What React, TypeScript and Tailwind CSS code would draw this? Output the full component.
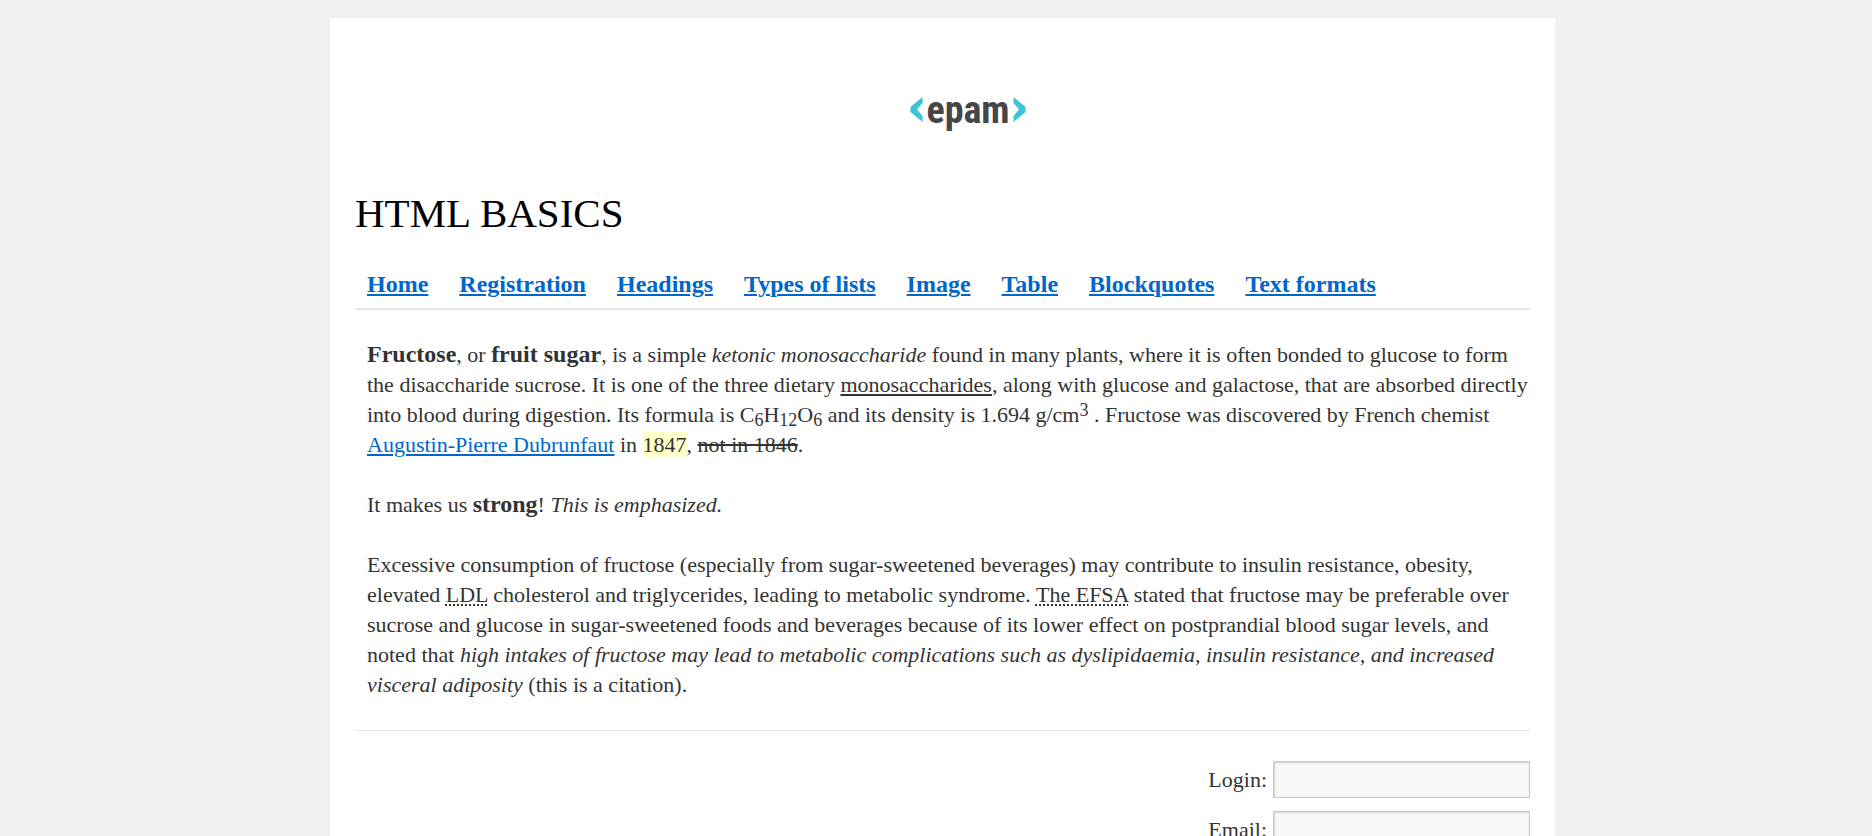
const navItems = [
  "Home",
  "Registration",
  "Headings",
  "Types of lists",
  "Image",
  "Table",
  "Blockquotes",
  "Text formats",
];

const fields = [
  { id: "login", label: "Login:", type: "text" },
  { id: "email", label: "Email:", type: "email" },
];

function Logo() {
  return (
    <svg width="116" height="50" viewBox="0 0 116 50" role="img" aria-label="epam">
      <path d="M12.500 9v6L7 21.500l5.500 6.500v6L.500 24v-5z" fill="#3bc3d9" />
      <text
        x="58"
        y="35"
        textAnchor="middle"
        fill="#464547"
        className="font-['Roboto_Condensed','Liberation_Sans_Narrow','Liberation_Sans',sans-serif] text-[38px] font-bold"
      >
        epam
      </text>
      <path d="M103.500 9v6l5.500 6.500-5.500 6.500v6l12-10v-5z" fill="#3bc3d9" />
    </svg>
  );
}

export default function App() {
  return (
    <div className="min-h-screen bg-[#f0f0f0] pt-[18px] pl-[13px] font-['Liberation_Serif',serif] text-[22px] leading-[30px] text-[#333]">
      <div className="mx-auto max-w-[1225px] bg-white px-[25px] pt-[70px] pb-[25px]">
        <header>
          <div className="flex justify-center pl-[50px]">
            <Logo />
          </div>
          <h1 className="mt-[49px] text-[41px] leading-[52px] text-black">HTML BASICS</h1>
          <nav className="mt-[30px] border-b-2 border-[#e6e6e6] pb-[9px] pl-3">
            <ul className="flex flex-wrap gap-x-[31px] text-[24px]">
              {navItems.map((item) => (
                <li key={item}>
                  <a href="#" className="font-bold text-[#0066cc] underline decoration-2 underline-offset-2">
                    {item}
                  </a>
                </li>
              ))}
            </ul>
          </nav>
        </header>

        <main className="mt-[30px]">
          <div className="flex flex-col gap-[30px] pl-3 [&_b]:text-[24px] [&_b]:leading-none [&_strong]:text-[24px] [&_strong]:leading-none [&_sub]:-bottom-1 [&_sub]:text-[18px] [&_sup]:-top-1.5 [&_sup]:text-[18px]">
            <p>
              <b>Fructose</b>, or <b>fruit sugar</b>, is a simple <i>ketonic monosaccharide</i> found in many
              plants, where it is often bonded to glucose to form the disaccharide sucrose. It is one of the three
              dietary <u className="decoration-2 underline-offset-2">monosaccharides</u>, along with glucose and
              galactose, that are absorbed directly into blood during digestion. Its formula is C<sub>6</sub>H
              <sub>12</sub>O<sub>6</sub> and its density is 1.694 g/cm<sup>3</sup> . Fructose was discovered by
              French chemist{" "}
              <a href="#" className="text-[#0066cc] underline decoration-2 underline-offset-2">
                Augustin-Pierre Dubrunfaut
              </a>{" "}
              in <mark className="bg-[#ffffcc] text-[#333]">1847</mark>, <del className="decoration-2">not in 1846</del>.
            </p>
            <p>
              It makes us <strong>strong</strong>! <em>This is emphasized.</em>
            </p>
            <p>
              Excessive consumption of fructose (especially from sugar-sweetened beverages) may contribute to insulin
              resistance, obesity, elevated{" "}
              <abbr className="underline decoration-dotted decoration-2 underline-offset-2">LDL</abbr> cholesterol and
              triglycerides, leading to metabolic syndrome.{" "}
              <abbr className="underline decoration-dotted decoration-2 underline-offset-2">The EFSA</abbr> stated that
              fructose may be preferable over sucrose and glucose in sugar-sweetened foods and beverages because of its
              lower effect on postprandial blood sugar levels, and noted that{" "}
              <cite>
                high intakes of fructose may lead to metabolic complications such as dyslipidaemia, insulin
                resistance, and increased visceral adiposity
              </cite>{" "}
              (this is a citation).
            </p>
          </div>

          <hr className="my-[30px] border-[#e6e6e6]" />

          <form className="flex flex-col gap-[13px]">
            {fields.map((field) => (
              <div key={field.id} className="flex items-center justify-end gap-[6px]">
                <label htmlFor={field.id}>{field.label}</label>
                <input
                  id={field.id}
                  type={field.type}
                  className="h-[37px] w-[257px] border border-[#c8c8c8] bg-[#f8f8f8] px-2 text-base shadow-[inset_1px_1px_2px_#d4d4d4]"
                />
              </div>
            ))}
          </form>
        </main>
      </div>
    </div>
  );
}
